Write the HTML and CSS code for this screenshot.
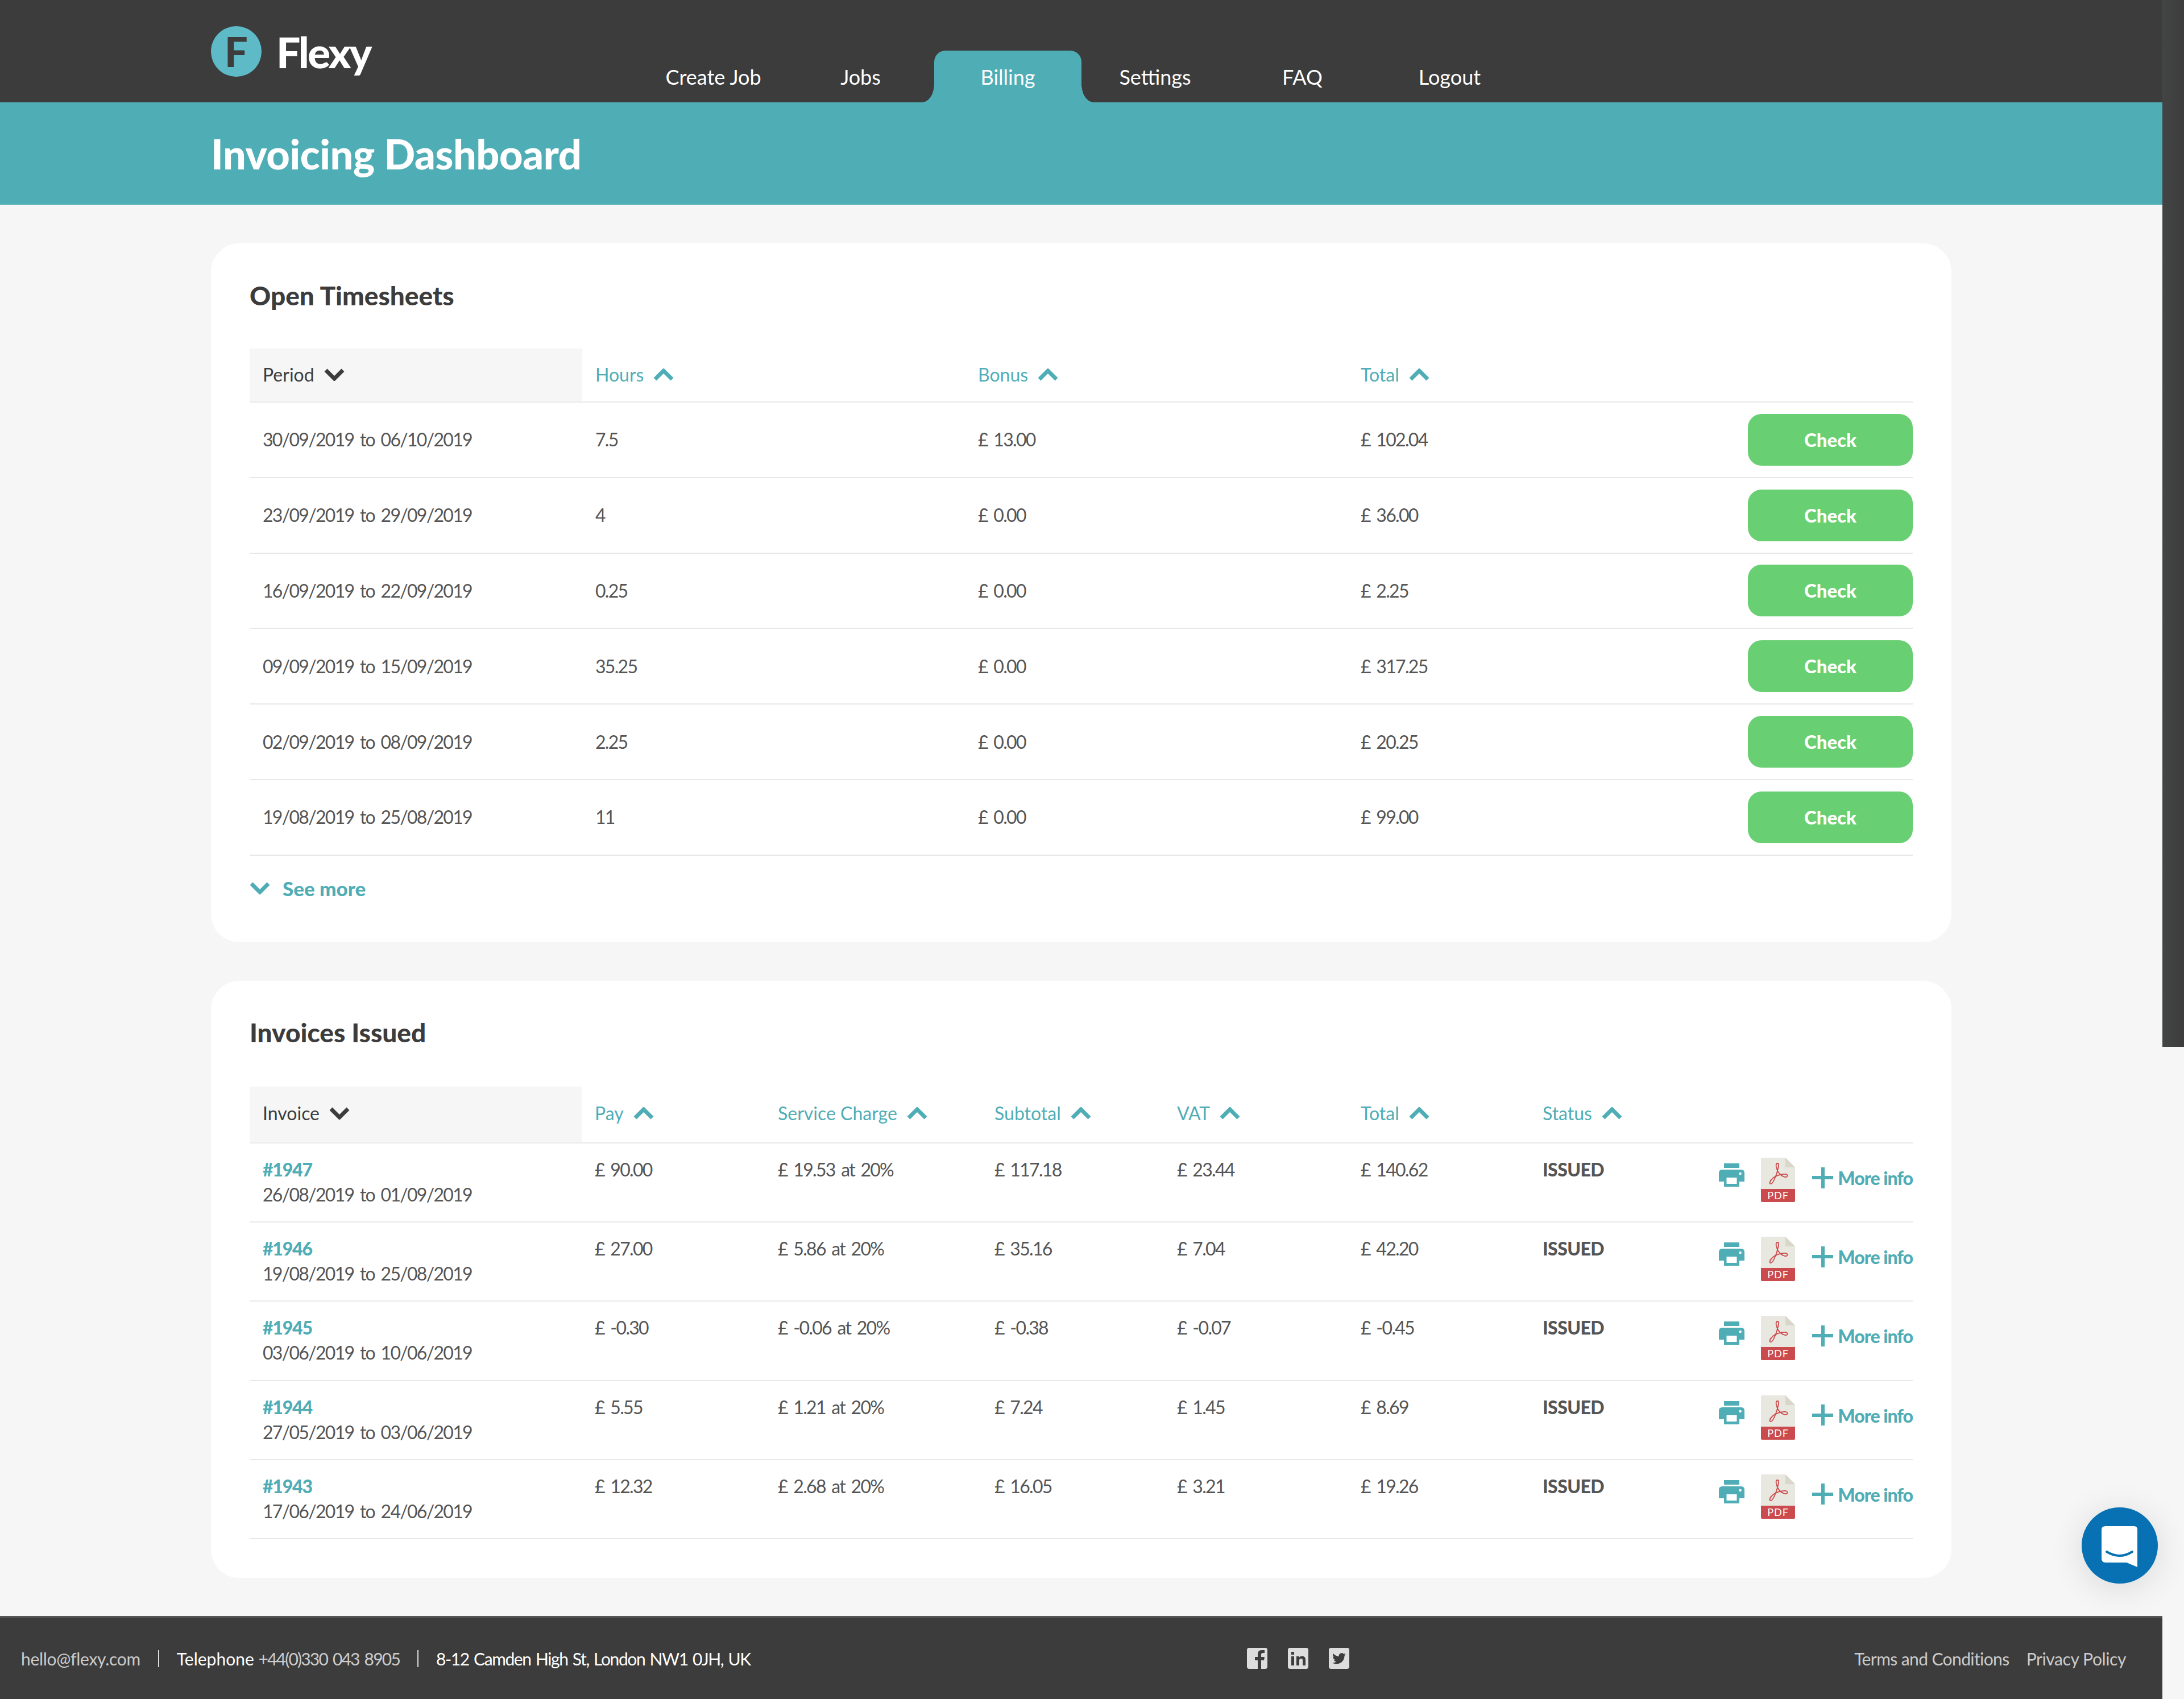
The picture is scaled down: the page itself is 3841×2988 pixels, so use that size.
FILE: index.html
```html
<html>
<head>
  <title>Flexy - Invoicing Dashboard</title>
  <link rel="stylesheet" href="styles.css">
</head>
<body>
  <svg class="defs" width="0" height="0">
    <symbol id="chev-down" viewBox="0 0 36 22"><path d="M3 3 L18 18 L33 3" fill="none" stroke="currentColor" stroke-width="7"/></symbol>
    <symbol id="chev-up" viewBox="0 0 36 22"><path d="M3 19 L18 4 L33 19" fill="none" stroke="currentColor" stroke-width="7"/></symbol>
    <symbol id="printer" viewBox="0 0 45 41">
      <rect x="9" y="0" width="27" height="8" fill="#4fadb6"/>
      <path d="M6 11 H39 Q45 11 45 17 V32 H36 V41 H9 V32 H0 V17 Q0 11 6 11 Z" fill="#4fadb6"/>
      <rect x="13.500" y="25" width="18" height="11" fill="#fff"/>
      <circle cx="37.600" cy="18" r="2.300" fill="#fff"/>
    </symbol>
    <symbol id="pdf" viewBox="0 0 60 78">
      <path d="M0 2 Q0 0 2 0 H43 L60 17 V56 H0 Z" fill="#e9e8e0"/>
      <path d="M43 0 L60 17 H43 Z" fill="#d9d7ca"/>
      <path d="M0 55 H60 V76 Q60 78 58 78 H2 Q0 78 0 76 Z" fill="#cb4a4d"/>
      <path d="M29 10 C26 10 26 15 28 20 C30 27 35 32 42 34 C47 35 48 30 44 29 C36 28 24 32 19 38 C14 43 15 47 18 46 C23 44 30 22 31 14 C31.500 11 31 10 29 10 Z" fill="none" stroke="#cb4a4d" stroke-width="1.800"/>
    </symbol>
  </svg>

  <div class="scroll-strip"></div>

  <div class="page">
    <header class="topbar">
      <div class="wrap topbar-in">
        <div class="logo">
          <span class="logo-mark">F</span>
          <span class="logo-name">Flexy</span>
        </div>
        <nav class="nav">
          <a class="nav-item">Create Job</a>
          <a class="nav-item">Jobs</a>
          <a class="nav-item active">Billing</a>
          <a class="nav-item">Settings</a>
          <a class="nav-item">FAQ</a>
          <a class="nav-item">Logout</a>
        </nav>
      </div>
    </header>

    <div class="band">
      <div class="wrap"><h1>Invoicing Dashboard</h1></div>
    </div>

    <main class="wrap main">
      <section class="card card-open">
        <h2>Open Timesheets</h2>
        <div class="row-open head">
          <div class="th sorted">Period <svg class="chev"><use href="#chev-down"/></svg></div>
          <div class="th">Hours <svg class="chev"><use href="#chev-up"/></svg></div>
          <div class="th">Bonus <svg class="chev"><use href="#chev-up"/></svg></div>
          <div class="th">Total <svg class="chev"><use href="#chev-up"/></svg></div>
          <div></div>
        </div>
        <div class="row-open"><div class="td">30/09/2019 to 06/10/2019</div><div class="td">7.5</div><div class="td">£ 13.00</div><div class="td">£ 102.04</div><a class="btn">Check</a></div>
        <div class="row-open"><div class="td">23/09/2019 to 29/09/2019</div><div class="td">4</div><div class="td">£ 0.00</div><div class="td">£ 36.00</div><a class="btn">Check</a></div>
        <div class="row-open"><div class="td">16/09/2019 to 22/09/2019</div><div class="td">0.25</div><div class="td">£ 0.00</div><div class="td">£ 2.25</div><a class="btn">Check</a></div>
        <div class="row-open"><div class="td">09/09/2019 to 15/09/2019</div><div class="td">35.25</div><div class="td">£ 0.00</div><div class="td">£ 317.25</div><a class="btn">Check</a></div>
        <div class="row-open"><div class="td">02/09/2019 to 08/09/2019</div><div class="td">2.25</div><div class="td">£ 0.00</div><div class="td">£ 20.25</div><a class="btn">Check</a></div>
        <div class="row-open"><div class="td">19/08/2019 to 25/08/2019</div><div class="td">11</div><div class="td">£ 0.00</div><div class="td">£ 99.00</div><a class="btn">Check</a></div>
        <a class="see-more"><svg class="chev"><use href="#chev-down"/></svg> See more</a>
      </section>

      <section class="card card-issued">
        <h2>Invoices Issued</h2>
        <div class="row-inv head">
          <div class="th sorted">Invoice <svg class="chev"><use href="#chev-down"/></svg></div>
          <div class="th">Pay <svg class="chev"><use href="#chev-up"/></svg></div>
          <div class="th">Service Charge <svg class="chev"><use href="#chev-up"/></svg></div>
          <div class="th">Subtotal <svg class="chev"><use href="#chev-up"/></svg></div>
          <div class="th">VAT <svg class="chev"><use href="#chev-up"/></svg></div>
          <div class="th">Total <svg class="chev"><use href="#chev-up"/></svg></div>
          <div class="th">Status <svg class="chev"><use href="#chev-up"/></svg></div>
          <div></div>
        </div>

        <div class="row-inv">
          <div class="tc"><a class="inv-no">#1947</a><br>26/08/2019 to 01/09/2019</div>
          <div class="tc">£ 90.00</div><div class="tc">£ 19.53 at 20%</div><div class="tc">£ 117.18</div><div class="tc">£ 23.44</div><div class="tc">£ 140.62</div>
          <div class="tc status">ISSUED</div>
          <div class="actions"><svg class="ic-print"><use href="#printer"/></svg><svg class="ic-pdf" viewBox="0 0 60 78"><use href="#pdf" width="60" height="78"/><text class="pdf-label" x="30" y="73">PDF</text></svg><a class="more"><span class="plus"></span>More info</a></div>
        </div>
        <div class="row-inv">
          <div class="tc"><a class="inv-no">#1946</a><br>19/08/2019 to 25/08/2019</div>
          <div class="tc">£ 27.00</div><div class="tc">£ 5.86 at 20%</div><div class="tc">£ 35.16</div><div class="tc">£ 7.04</div><div class="tc">£ 42.20</div>
          <div class="tc status">ISSUED</div>
          <div class="actions"><svg class="ic-print"><use href="#printer"/></svg><svg class="ic-pdf" viewBox="0 0 60 78"><use href="#pdf" width="60" height="78"/><text class="pdf-label" x="30" y="73">PDF</text></svg><a class="more"><span class="plus"></span>More info</a></div>
        </div>
        <div class="row-inv">
          <div class="tc"><a class="inv-no">#1945</a><br>03/06/2019 to 10/06/2019</div>
          <div class="tc">£ -0.30</div><div class="tc">£ -0.06 at 20%</div><div class="tc">£ -0.38</div><div class="tc">£ -0.07</div><div class="tc">£ -0.45</div>
          <div class="tc status">ISSUED</div>
          <div class="actions"><svg class="ic-print"><use href="#printer"/></svg><svg class="ic-pdf" viewBox="0 0 60 78"><use href="#pdf" width="60" height="78"/><text class="pdf-label" x="30" y="73">PDF</text></svg><a class="more"><span class="plus"></span>More info</a></div>
        </div>
        <div class="row-inv">
          <div class="tc"><a class="inv-no">#1944</a><br>27/05/2019 to 03/06/2019</div>
          <div class="tc">£ 5.55</div><div class="tc">£ 1.21 at 20%</div><div class="tc">£ 7.24</div><div class="tc">£ 1.45</div><div class="tc">£ 8.69</div>
          <div class="tc status">ISSUED</div>
          <div class="actions"><svg class="ic-print"><use href="#printer"/></svg><svg class="ic-pdf" viewBox="0 0 60 78"><use href="#pdf" width="60" height="78"/><text class="pdf-label" x="30" y="73">PDF</text></svg><a class="more"><span class="plus"></span>More info</a></div>
        </div>
        <div class="row-inv">
          <div class="tc"><a class="inv-no">#1943</a><br>17/06/2019 to 24/06/2019</div>
          <div class="tc">£ 12.32</div><div class="tc">£ 2.68 at 20%</div><div class="tc">£ 16.05</div><div class="tc">£ 3.21</div><div class="tc">£ 19.26</div>
          <div class="tc status">ISSUED</div>
          <div class="actions"><svg class="ic-print"><use href="#printer"/></svg><svg class="ic-pdf" viewBox="0 0 60 78"><use href="#pdf" width="60" height="78"/><text class="pdf-label" x="30" y="73">PDF</text></svg><a class="more"><span class="plus"></span>More info</a></div>
        </div>
      </section>
    </main>

    <footer class="footer">
      <div class="foot-contact">
        <span class="dim foot-mail">hello@flexy.com</span>
        <span class="sep"></span>
        <span>Telephone <span class="dim foot-num">+44(0)330 043 8905</span></span>
        <span class="sep"></span>
        <span class="foot-addr">8-12 Camden High St, London NW1 0JH, UK</span>
      </div>
      <div class="foot-social">
        <svg viewBox="0 0 36 37"><rect width="36" height="37" rx="4" fill="#ddd"/><path d="M25 37 V22 H30 L31 16 H25 V12 Q25 9 28 9 H31 V4 H26 Q19 4 19 11 V16 H14 V22 H19 V37 Z" fill="#3c3c3c"/></svg>
        <svg viewBox="0 0 36 37"><rect width="36" height="37" rx="4" fill="#ddd"/><path d="M6 15 H11 V31 H6 Z M6 7 H11 V12 H6 Z M15 15 H20 V17 Q22 14.500 25 14.500 Q31 14.500 31 21 V31 H26 V22 Q26 19 23.500 19 Q20 19 20 22 V31 H15 Z" fill="#3c3c3c"/></svg>
        <svg viewBox="0 0 36 37"><rect width="36" height="37" rx="4" fill="#ddd"/><g transform="translate(5 6) scale(1.080)"><path d="M23 5c-.8.4-1.700.6-2.600.7.9-.6 1.600-1.400 2-2.500-.9.500-1.800.9-2.900 1.100C18.600 3.400 17.400 3 16.200 3c-2.500 0-4.500 2-4.500 4.500 0 .4 0 .7.1 1C8 8.300 4.700 6.500 2.500 3.800c-.4.7-.6 1.400-.6 2.300 0 1.600.8 2.900 2 3.700-.7 0-1.400-.2-2-.6v.1c0 2.200 1.600 4 3.600 4.400-.4.1-.8.2-1.200.2-.3 0-.6 0-.8-.1.6 1.800 2.200 3.100 4.200 3.100-1.500 1.200-3.500 1.900-5.600 1.900-.4 0-.7 0-1.100-.1C3 20 5.400 20.700 8 20.700c8.300 0 12.800-6.900 12.800-12.800v-.6c.9-.6 1.600-1.400 2.200-2.300z" fill="#3c3c3c"/></g></svg>
      </div>
      <div class="foot-links">
        <a class="foot-terms">Terms and Conditions</a>
        <a class="foot-privacy">Privacy Policy</a>
      </div>
    </footer>
  </div>

  <div class="chat">
    <svg viewBox="0 0 64 72" width="64" height="72">
      <path d="M7 0 H57 Q63 0 63 6 V72 L44 64 H7 Q0 64 0 57 V6 Q0 0 7 0 Z" fill="#fff"/>
      <path d="M9 45 Q32 59 54 45" fill="none" stroke="#0871b3" stroke-width="4" stroke-linecap="round"/>
    </svg>
  </div>
</body>
</html>
```

FILE: styles.css
```css
html, body {
  margin: 0;
  padding: 0;
}
body {
  position: relative;
  width: 3841px;
  height: 2988px;
  overflow: hidden;
  background: #f6f6f6;
  font: 32px/44px Lato, "Open Sans", sans-serif;
  color: #555;
}
.defs {
  position: absolute;
}
.scroll-strip {
  position: absolute;
  top: 0;
  right: 0;
  width: 38px;
  height: 1841px;
  background: linear-gradient(to right, #434545, #3c3c3c);
}
.page {
  width: 3803px;
}
.wrap {
  width: 3061px;
  margin: 0 auto;
}

/* Header */
.topbar {
  height: 180px;
  background: #3c3c3c;
}
.topbar-in {
  display: flex;
  height: 100%;
}
.logo {
  width: 754px;
  display: flex;
  align-items: flex-start;
  padding-top: 46px;
  box-sizing: border-box;
}
.logo-mark {
  width: 89px;
  height: 89px;
  border-radius: 50%;
  background: #5fbac8;
  color: #3c3c3c;
  font: 900 72px/89px Lato, sans-serif;
  text-align: center;
}
.logo-name {
  margin: 7px 0 0 26px;
  color: #fff;
  font: 900 75px/76px Lato, sans-serif;
  letter-spacing: -3px;
}
.nav {
  display: flex;
  align-self: flex-end;
}
.nav-item {
  position: relative;
  width: 259px;
  height: 91px;
  color: #fff;
  font-size: 36px;
  line-height: 93px;
  text-align: center;
}
.nav-item.active {
  background: #4fadb6;
  border-radius: 20px 20px 0 0;
}
.nav-item.active::before,
.nav-item.active::after {
  content: "";
  position: absolute;
  bottom: 0;
  width: 21px;
  height: 32px;
}
.nav-item.active::before {
  left: -21px;
  background: radial-gradient(ellipse 21px 32px at 0 0, transparent 98%, #4fadb6 100%);
}
.nav-item.active::after {
  right: -21px;
  background: radial-gradient(ellipse 21px 32px at 100% 0, transparent 98%, #4fadb6 100%);
}

.band {
  height: 180px;
  background: #4fadb6;
}
h1 {
  margin: 0;
  color: #fff;
  font: 900 72px/180px Lato, sans-serif;
  letter-spacing: -0.4px;
}

/* Cards */
.main {
  padding: 68px 0 67px;
  display: flex;
  flex-direction: column;
  gap: 68px;
}
.card {
  background: #fff;
  border-radius: 50px;
  padding: 0 68px;
}
.card-open {
  height: 1229px;
}
.card-issued {
  height: 1050px;
}
h2 {
  margin: 0;
  height: 185px;
  color: #3c3c3c;
  font: 900 46px/184px Lato, sans-serif;
}
.card-issued h2 {
  height: 186px;
  line-height: 182px;
}
.row-open,
.row-inv {
  display: grid;
  box-sizing: border-box;
  border-bottom: 2px solid #e8e8e8;
}
.row-open {
  grid-template-columns: 585px 673px 673px 1fr 290px;
  align-items: center;
  height: 132.8px;
}
.row-inv {
  grid-template-columns: 584px 322px 381px 321px 323px 320px 320px 1fr;
  height: 139.2px;
}
.row-open.head,
.row-inv.head {
  height: 95px;
  align-items: stretch;
}
.row-inv.head {
  height: 100px;
}
.row-inv.head .th {
  padding-bottom: 4px;
}
.th {
  display: flex;
  align-items: center;
  gap: 17px;
  padding-left: 23px;
  margin-bottom: 1px;
  color: #4fadb6;
}
.th.sorted {
  background: #f6f6f6;
  color: #3c3c3c;
}
.chev {
  width: 36px;
  height: 22px;
}
.td {
  padding-left: 23px;
  letter-spacing: -1.7px;
  word-spacing: 4px;
}
.tc {
  padding: 24px 0 0 23px;
  letter-spacing: -1.7px;
  word-spacing: 4px;
}
.btn {
  height: 91px;
  border-radius: 24px;
  background: #68cf72;
  color: #fff;
  font-size: 33px;
  font-weight: 900;
  line-height: 91px;
  text-align: center;
}
.see-more {
  display: flex;
  align-items: center;
  gap: 22px;
  height: 115px;
  color: #4fadb6;
  font-size: 35px;
  font-weight: 900;
}
.inv-no {
  color: #4fadb6;
  font-weight: 900;
  letter-spacing: -1.2px;
}
.status {
  font-weight: 900;
  letter-spacing: -0.6px;
}
.actions {
  display: flex;
  justify-content: flex-end;
  align-items: flex-start;
  padding-top: 25px;
}
.ic-print {
  width: 45px;
  height: 41px;
  margin: 10px 29px 0 0;
}
.ic-pdf {
  width: 60px;
  height: 78px;
  margin-right: 30px;
}
.pdf-label {
  fill: #fff;
  font-size: 18px;
  letter-spacing: 1px;
  text-anchor: middle;
}
.more {
  display: flex;
  align-items: center;
  gap: 8px;
  height: 44px;
  margin-top: 14px;
  color: #4fadb6;
  font-weight: 900;
  letter-spacing: -1px;
  white-space: nowrap;
}
.plus {
  width: 37px;
  height: 37px;
  margin-bottom: 2px;
  background:
    linear-gradient(#4fadb6, #4fadb6) center / 37px 6px no-repeat,
    linear-gradient(#4fadb6, #4fadb6) center / 6px 37px no-repeat;
}

/* Footer */
.footer {
  display: grid;
  grid-template-columns: 2156px 1fr auto;
  align-items: center;
  box-sizing: border-box;
  height: 146px;
  padding: 0 64px 0 37px;
  background: #3c3c3c;
  border-top: 3px solid #555;
  color: #fff;
  font-size: 30px;
}
.foot-contact {
  display: flex;
  align-items: center;
  gap: 31px;
}
.dim {
  color: #ccc;
}
.foot-mail {
  letter-spacing: -0.3px;
}
.foot-num {
  letter-spacing: -1.8px;
  word-spacing: 3px;
}
.foot-addr {
  letter-spacing: -1.4px;
  word-spacing: 2px;
}
.sep {
  width: 2px;
  height: 30px;
  background: #ddd;
}
.foot-social {
  display: flex;
  gap: 36px;
}
.foot-social svg {
  width: 36px;
  height: 37px;
}
.foot-links {
  display: flex;
  gap: 30px;
  color: #ccc;
}
.foot-terms {
  letter-spacing: -0.6px;
}
.foot-privacy {
  letter-spacing: -0.4px;
}

.chat {
  position: absolute;
  left: 3661px;
  top: 2651px;
  width: 134px;
  height: 134px;
  border-radius: 50%;
  background: #0871b3;
  box-shadow: 0 8px 60px rgba(0, 0, 0, 0.12);
  display: flex;
  align-items: center;
  justify-content: center;
}
.chat svg {
  margin-top: 4px;
}
```
